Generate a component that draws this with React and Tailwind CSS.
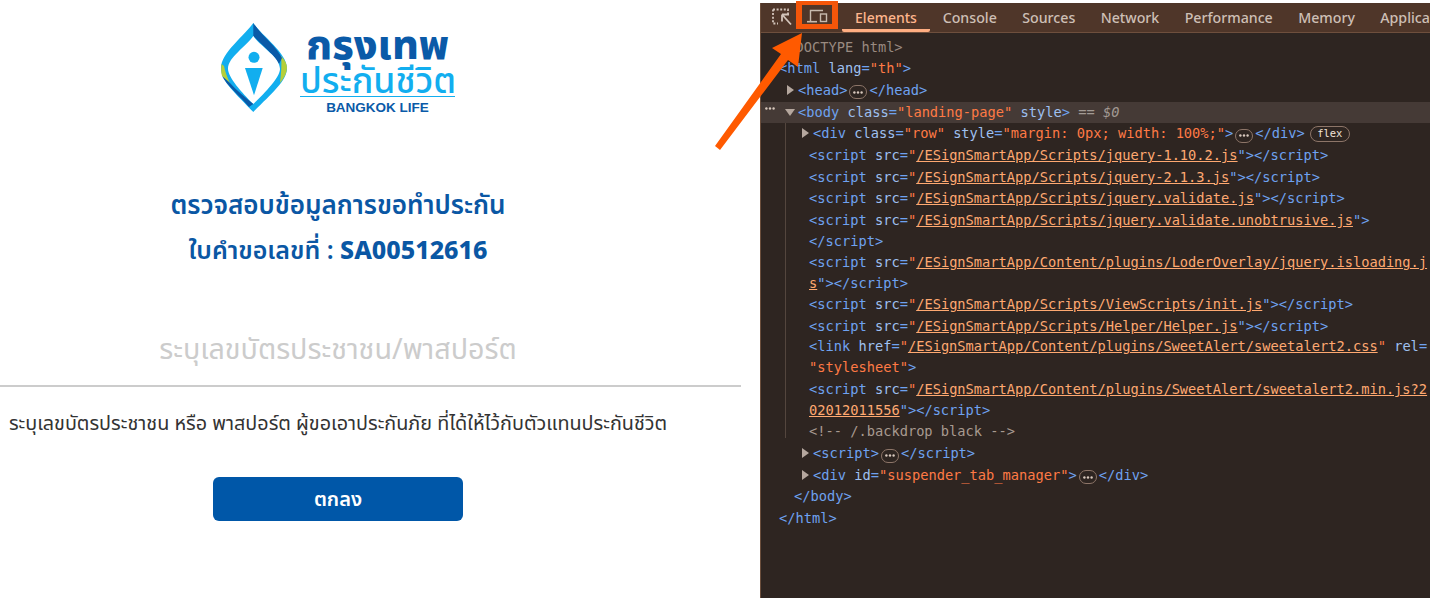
const THAI = "font-['Noto_Sans','Noto_Sans_Thai','DejaVu_Sans',sans-serif]";

const Tag = ({ children }) => <span className="text-[#6ea2f0]">{children}</span>;
const Attr = ({ children }) => <span className="text-[#9fc0f0]">{children}</span>;
const Val = ({ children }) => <span className="text-[#ff7a45]">{children}</span>;
const Link = ({ children }) => <span className="text-[#ffa971] underline">{children}</span>;

function Dots({ fill = "#d8c8bd" }) {
  return (
    <svg width="10" height="3" viewBox="0 0 10 3" fill={fill}>
      <circle cx="1.4" cy="1.5" r="1.2" />
      <circle cx="5" cy="1.5" r="1.2" />
      <circle cx="8.6" cy="1.5" r="1.2" />
    </svg>
  );
}

function More() {
  return (
    <span className="mx-[2px] inline-flex h-[14px] w-[18px] items-center justify-center rounded-full border border-[#8d7568] align-[1px]">
      <Dots />
    </span>
  );
}

function Arrow({ open }) {
  return open ? (
    <span className="absolute left-[-13px] top-[7px] h-0 w-0 border-x-[5px] border-t-[7px] border-x-transparent border-t-[#b5a79e]" />
  ) : (
    <span className="absolute left-[-11px] top-[5px] h-0 w-0 border-y-[5px] border-l-[7px] border-y-transparent border-l-[#b5a79e]" />
  );
}

function Script({ src }) {
  return (
    <>
      <Tag>{"<script"}</Tag> <Attr>src</Attr>
      <Tag>=</Tag>
      <Val>"</Val>
      <Link>{src}</Link>
      <Tag>"</Tag>
      <Tag>{"></script>"}</Tag>
    </>
  );
}

function Row({ pad, h = "h-[21.7px]", children }) {
  return (
    <div className={`${h} whitespace-nowrap leading-[21px]`}>
      <div className={`relative ${pad}`}>{children}</div>
    </div>
  );
}

function DevTools() {
  const tabs = ["Console", "Sources", "Network", "Performance", "Memory", "Application"];
  return (
    <div className="mt-[3px] min-w-0 flex-1 overflow-hidden border-l border-[#6b4e3c] bg-[#2e2521]">
      <div className="flex h-[30px] items-center border-b border-[#6e4f3d] bg-[#4f3629] font-['Noto_Sans',sans-serif] text-[14.2px] font-medium text-[#cdbfb5]">
        <svg className="ml-[11px] shrink-0" width="20" height="20" viewBox="0 0 20 20" fill="none">
          <path d="M1 1.5h15v5" stroke="#d2c4ba" strokeWidth="1.8" strokeDasharray="2 1.6" />
          <path d="M1 1.5v14h5" stroke="#d2c4ba" strokeWidth="1.8" strokeDasharray="2 1.6" />
          <path d="M10 6.5h7M10 6.5v7M10 6.5l9 10" stroke="#d2c4ba" strokeWidth="1.8" />
        </svg>
        <svg className="ml-[13px] shrink-0" width="26" height="18" viewBox="0 0 26 18" fill="none">
          <path d="M5.5 12V1.5H18" stroke="#c8baae" strokeWidth="1.4" />
          <path d="M2 12.7h10" stroke="#c8baae" strokeWidth="1.6" />
          <rect x="15.5" y="5" width="6" height="7.5" stroke="#c8baae" strokeWidth="1.4" />
        </svg>
        <div className="ml-[11px] flex h-full w-[88px] shrink-0 items-center justify-center rounded-b-[2px] border-b-[3px] border-[#ffae82] pt-[3px] text-[14px] text-[#ffb68d]">
          Elements
        </div>
        {tabs.map((t) => (
          <div key={t} className="shrink-0 px-[12.7px]">
            {t}
          </div>
        ))}
      </div>

      <div className="relative pt-[3.6px] font-['DejaVu_Sans_Mono',monospace] text-[13.7px] text-[#a89a90]">
        <div className="absolute bottom-[92px] left-[24px] top-[90px] w-px bg-[#54463e]" />
        <Row pad="pl-[18px]">
          <span className="text-[#998a80]">{"<!DOCTYPE html>"}</span>
        </Row>
        <Row pad="pl-[18px]">
          <Tag>{"<html"}</Tag> <Attr>lang</Attr>
          <Tag>=</Tag>
          <Val>"th"</Val>
          <Tag>{">"}</Tag>
        </Row>
        <Row pad="ml-[37px]">
          <Arrow />
          <Tag>{"<head>"}</Tag>
          <More />
          <Tag>{"</head>"}</Tag>
        </Row>
        <div className="relative h-[21.7px] whitespace-nowrap bg-[#453a36] leading-[21px]">
          <span className="absolute left-[4px] top-[5px] flex">
            <Dots />
          </span>
          <div className="relative ml-[37px]">
            <Arrow open />
            <Tag>{"<body"}</Tag> <Attr>class</Attr>
            <Tag>=</Tag>
            <Val>"landing-page"</Val> <Attr>style</Attr>
            <Tag>{">"}</Tag>
            <span className="text-[#a39a94]">
              {" "}
              == <i>$0</i>
            </span>
          </div>
        </div>
        <Row pad="ml-[52px]">
          <Arrow />
          <Tag>{"<div"}</Tag> <Attr>class</Attr>
          <Tag>=</Tag>
          <Val>"row"</Val> <Attr>style</Attr>
          <Tag>=</Tag>
          <Val>"margin: 0px; width: 100%;"</Val>
          <Tag>{">"}</Tag>
          <More />
          <Tag>{"</div>"}</Tag>
          <span className="ml-[5px] inline-flex h-[16px] w-[40px] items-center justify-center rounded-full border border-[#8d7568] align-[1px] text-[10.5px] text-[#f0e2d8]">
            flex
          </span>
        </Row>
        <Row pad="pl-[48px]">
          <Script src="/ESignSmartApp/Scripts/jquery-1.10.2.js" />
        </Row>
        <Row pad="pl-[48px]">
          <Script src="/ESignSmartApp/Scripts/jquery-2.1.3.js" />
        </Row>
        <Row pad="pl-[48px]">
          <Script src="/ESignSmartApp/Scripts/jquery.validate.js" />
        </Row>
        <Row pad="pl-[48px]" h="h-[20.5px]">
          <Tag>{"<script"}</Tag> <Attr>src</Attr>
          <Tag>=</Tag>
          <Val>"</Val>
          <Link>/ESignSmartApp/Scripts/jquery.validate.unobtrusive.js</Link>
          <Tag>"</Tag>
          <Tag>{">"}</Tag>
        </Row>
        <Row pad="pl-[48px]" h="h-[21.5px]">
          <Tag>{"</script>"}</Tag>
        </Row>
        <Row pad="pl-[48px]" h="h-[20.5px]">
          <Tag>{"<script"}</Tag> <Attr>src</Attr>
          <Tag>=</Tag>
          <Val>"</Val>
          <Link>/ESignSmartApp/Content/plugins/LoderOverlay/jquery.isloading.j</Link>
        </Row>
        <Row pad="pl-[48px]">
          <Link>s</Link>
          <Tag>"</Tag>
          <Tag>{"></script>"}</Tag>
        </Row>
        <Row pad="pl-[48px]">
          <Script src="/ESignSmartApp/Scripts/ViewScripts/init.js" />
        </Row>
        <Row pad="pl-[48px]" h="h-[20.5px]">
          <Script src="/ESignSmartApp/Scripts/Helper/Helper.js" />
        </Row>
        <Row pad="pl-[48px]" h="h-[21px]">
          <Tag>{"<link"}</Tag> <Attr>href</Attr>
          <Tag>=</Tag>
          <Val>"</Val>
          <Link>/ESignSmartApp/Content/plugins/SweetAlert/sweetalert2.css</Link>
          <Val>"</Val> <Attr>rel</Attr>
          <Tag>=</Tag>
        </Row>
        <Row pad="pl-[48px]">
          <Val>"stylesheet"</Val>
          <Tag>{">"}</Tag>
        </Row>
        <Row pad="pl-[48px]" h="h-[20.5px]">
          <Tag>{"<script"}</Tag> <Attr>src</Attr>
          <Tag>=</Tag>
          <Val>"</Val>
          <Link>/ESignSmartApp/Content/plugins/SweetAlert/sweetalert2.min.js?2</Link>
        </Row>
        <Row pad="pl-[48px]">
          <Link>02012011556</Link>
          <Tag>"</Tag>
          <Tag>{"></script>"}</Tag>
        </Row>
        <Row pad="pl-[48px]">
          <span className="text-[#a89a90]">{"<!-- /.backdrop black -->"}</span>
        </Row>
        <Row pad="ml-[52px]">
          <Arrow />
          <Tag>{"<script>"}</Tag>
          <More />
          <Tag>{"</script>"}</Tag>
        </Row>
        <Row pad="ml-[52px]">
          <Arrow />
          <Tag>{"<div"}</Tag> <Attr>id</Attr>
          <Tag>=</Tag>
          <Val>"suspender_tab_manager"</Val>
          <Tag>{">"}</Tag>
          <More />
          <Tag>{"</div>"}</Tag>
        </Row>
        <Row pad="pl-[33px]">
          <Tag>{"</body>"}</Tag>
        </Row>
        <Row pad="pl-[18px]">
          <Tag>{"</html>"}</Tag>
        </Row>
      </div>
    </div>
  );
}

function LogoMark() {
  return (
    <svg className="shrink-0" width="66" height="90" viewBox="0 0 66 90">
      <path d="M32.3 0C40 12 66 30 66 45C66 58 50 71 32.3 89C15 71 0 58 0 45C0 30 24 12 32.3 0Z" fill="#12aeef" />
      <path d="M60 33C64 37 66 41 66 45C66 50 63 55 59 60C60 50 61 42 60 33Z" fill="#b5cf3a" />
      <path d="M32.3 0C40 12 56 24 61 35L58 41C50 28 38 20 32.3 13Z" fill="#0a5aa8" />
      <path d="M32.3 13C40 24 59 34 59 46C59 54 44 70 32.3 81C21 70 7 54 7 46C7 34 25 24 32.3 13Z" fill="#fff" />
      <path d="M0.5 41C0 46 0 50 1 53L9 60C6 54 4 48 3 43Z" fill="#b5cf3a" />
      <path d="M1 53C6 63 20 74 28 84L32.3 81C24 74 15 67 9 60Z" fill="#0a5aa8" />
      <circle cx="33" cy="34.3" r="5.5" fill="#12aeef" />
      <path d="M24 45H41.7L33 72.3Z" fill="#12aeef" />
    </svg>
  );
}

function Logo() {
  return (
    <div className="flex h-[113px] items-start justify-center gap-[13px] pt-[23px]">
      <LogoMark />
      <div className={`w-[155px] text-center ${THAI}`}>
        <div className="h-[40px] whitespace-nowrap text-[41px] font-extrabold leading-[40px] text-[#0a5aa8]">กรุงเทพ</div>
        <div className="h-[32.5px] whitespace-nowrap text-[35.6px] font-medium leading-[33px] text-[#12aeef]">ประกันชีวิต</div>
        <div className="h-px bg-[#12aeef]" />
        <div className="mt-[3.5px] font-['Liberation_Sans',sans-serif] text-[13.5px] font-bold leading-[15px] text-[#0a5aa8]">BANGKOK LIFE</div>
      </div>
    </div>
  );
}

export default function App() {
  return (
    <div className={`relative flex h-[598px] w-[1430px] overflow-hidden bg-white ${THAI}`}>
      <div className="w-[760px] shrink-0">
        <div className="w-[676px]">
          <Logo />
          <div className="mt-[69px] text-center font-semibold leading-[45px] text-[#0a57a4]">
            <div className="text-[26px]">ตรวจสอบข้อมูลการขอทำประกัน</div>
            <div className="text-[25px]">
              ใบคำขอเลขที่ : <b className="font-extrabold">SA00512616</b>
            </div>
          </div>
          <div className="mt-[54px] whitespace-nowrap text-center text-[28.7px] leading-[44px] text-[#ccc]">ระบุเลขบัตรประชาชน/พาสปอร์ต</div>
          <div className="mt-[15px] h-[2px] w-[741px] bg-[#ccc]" />
          <div className="mt-[22px] whitespace-nowrap text-center text-[19.8px] leading-[28px] text-[#333]">
            ระบุเลขบัตรประชาชน หรือ พาสปอร์ต ผู้ขอเอาประกันภัย ที่ได้ให้ไว้กับตัวแทนประกันชีวิต
          </div>
          <button className="mx-auto mt-[40px] flex h-[44px] w-[250px] items-center justify-center rounded-[6px] bg-[#0057a8] text-[20px] font-semibold text-white">
            ตกลง
          </button>
        </div>
      </div>

      <DevTools />

      {/* annotation over the screenshot */}
      <div className="absolute left-[796px] top-[1px] h-[28px] w-[42px] border-x-[6px] border-b-[5px] border-t-[4px] border-[#f4560a]" />
      <svg className="absolute left-[710px] top-[28px]" width="100" height="126" viewBox="710 28 100 126">
        <path d="M802 33L798 67L788 60L720 150L715 146L781 54L772 48Z" fill="#ff5a00" />
      </svg>
    </div>
  );
}
